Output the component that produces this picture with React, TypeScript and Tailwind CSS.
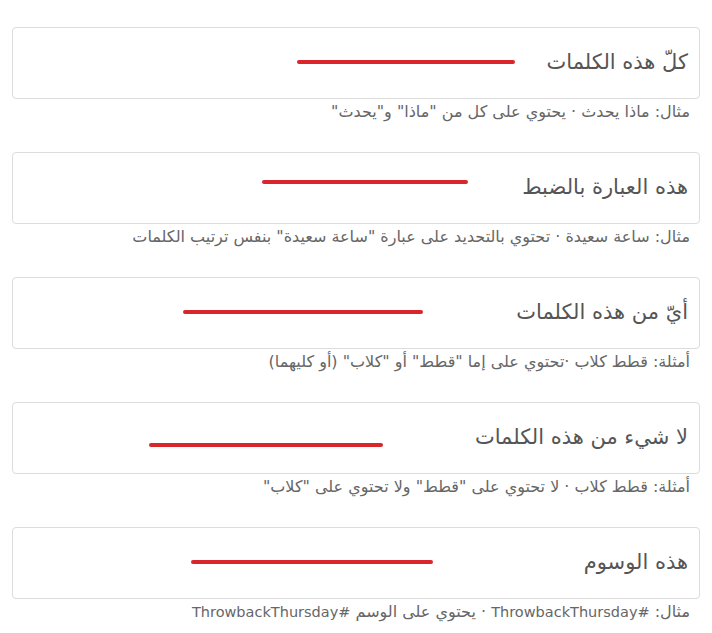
const Latin = ({ children }: { children: string }) => (
  <span className="text-[14.5px]">{children}</span>
);

const fields = [
  {
    label: "كلّ هذه الكلمات",
    hint: <>مثال: ماذا يحدث · يحتوي على كل من "ماذا" و"يحدث"</>,
    mark: { x1: 298, x2: 512, y: 34 },
  },
  {
    label: "هذه العبارة بالضبط",
    hint: <>مثال: ساعة سعيدة · تحتوي بالتحديد على عبارة "ساعة سعيدة" بنفس ترتيب الكلمات</>,
    mark: { x1: 263, x2: 465, y: 29 },
  },
  {
    label: "أيّ من هذه الكلمات",
    hint: <>أمثلة: قطط كلاب ·تحتوي على إما "قطط" أو "كلاب" (أو كليهما)</>,
    mark: { x1: 184, x2: 420, y: 34 },
  },
  {
    label: "لا شيء من هذه الكلمات",
    hint: <>أمثلة: قطط كلاب · لا تحتوي على "قطط" ولا تحتوي على "كلاب"</>,
    mark: { x1: 150, x2: 380, y: 42 },
  },
  {
    label: "هذه الوسوم",
    hint: (
      <>
        مثال: <Latin>#ThrowbackThursday</Latin> · يحتوي على الوسم <Latin>#ThrowbackThursday</Latin>
      </>
    ),
    mark: { x1: 192, x2: 430, y: 34 },
  },
];

export default function App() {
  return (
    <div
      dir="rtl"
      className="min-h-screen bg-white px-3 pt-[27px]"
      style={{ fontFamily: '"DejaVu Sans", Tahoma, sans-serif' }}
    >
      {fields.map((f) => (
        <div key={f.label} className="mb-[30px]">
          <div className="relative flex h-[72px] items-center rounded border border-[#dcdcdc] bg-white pr-[11px]">
            <span className="text-[21px] text-[#555]">{f.label}</span>
            <svg
              className="pointer-events-none absolute left-0 top-0"
              width="688"
              height="72"
            >
              <line
                x1={f.mark.x1 - 12}
                x2={f.mark.x2 - 12}
                y1={f.mark.y}
                y2={f.mark.y}
                stroke="#d9262b"
                strokeWidth="4"
                strokeLinecap="round"
              />
            </svg>
          </div>
          <p className="mt-[3px] pr-[10px] text-[16px] leading-[20px] text-[#666]">{f.hint}</p>
        </div>
      ))}
    </div>
  );
}
